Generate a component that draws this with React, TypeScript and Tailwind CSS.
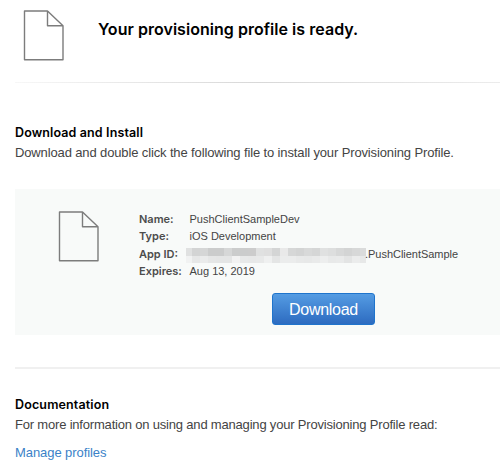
const TOP = ["#e0e1e1","#d3d4d4","#d5d6d6","#cbcccc","#cbcccc","#d6d7d7","#cbcccc","#cbcccc","#cccccc","#e0e1e1","#dfdfdf","#d4d5d5","#e9e9e9","#d6d7d7","#d3d4d4","#d8d9d9","#d5d6d6","#e0e1e1","#dddede","#d7d8d8","#d3d4d4","#d7d8d8","#dadbdb"];
const BOTTOM = ["#f1f2f2","#e6e7e7","#eaebeb","#e5e6e6","#e4e5e5","#e4e5e5","#f2f2f2","#e8e9e9","#e7e8e8","#e8e9e9","#eff0f0","#e4e5e5","#ebecec","#ebecec","#e8e9e9","#e7e8e8","#e9eaea","#edeeee","#e8e9e9","#e9eaea","#e3e4e4","#ebecec","#e7e8e8"];

function FileIcon() {
  return (
    <svg className="h-[52px] w-[42px] shrink-0" viewBox="0 0 42 52" fill="none" stroke="#7c7c7c" strokeWidth="1.4" strokeLinejoin="round">
      <path d="M1.5 1H24.5L40 15.8V49.8H1.5Z" />
      <path d="M24.5 1V15.8H40" />
    </svg>
  );
}

function MaskedPrefix() {
  return (
    <span className="-ml-[3.5px] mt-[3px] grid h-[15px] w-[180px] shrink-0 grid-cols-[6px_repeat(21,8px)_6px] grid-rows-[8px_7px]">
      {[...TOP, ...BOTTOM].map((color, i) => (
        <i key={i} style={{ backgroundColor: color }} />
      ))}
    </span>
  );
}

export default function App() {
  return (
    <main className="h-[473px] w-[500px] overflow-hidden bg-white pl-[15px] pt-[10px] font-['Liberation_Sans',sans-serif] text-[#444]">
      <header className="flex h-[72px] pl-[8px]">
        <FileIcon />
        <h1 className="ml-[33px] mt-[8px] whitespace-nowrap font-['Inter',sans-serif] text-[16px] leading-[22px] font-semibold tracking-[0.035px] text-black">Your provisioning profile is ready.</h1>
      </header>
      <div className="h-px bg-linear-to-r from-[#f7f7f7] via-[#d8d8d8] via-50% to-[#ececec]" />
      <section className="pt-[40px]">
        <h2 className="whitespace-nowrap font-['Inter',sans-serif] text-[12.5px] leading-[20px] font-semibold tracking-[0.12px] text-black">Download and Install</h2>
        <p className="whitespace-nowrap text-[13px] leading-[20px] tracking-[-0.13px]">Download and double click the following file to install your Provisioning Profile.</p>
      </section>
      <section className="mt-[26px] h-[146px] bg-[#f8faf9] pt-[21px]">
        <div className="flex h-[73px] pl-[43px]">
          <div className="pt-[1.3px]"><FileIcon /></div>
          <dl className="ml-[39px] grid grid-cols-[50.5px_auto] auto-rows-[17.4px] whitespace-nowrap text-[11px] leading-[18px]">
            <dt className="font-['Inter',sans-serif] font-semibold text-[#4c4c4c]">Name:</dt>
            <dd>PushClientSampleDev</dd>
            <dt className="font-['Inter',sans-serif] font-semibold text-[#4c4c4c]">Type:</dt>
            <dd>iOS Development</dd>
            <dt className="font-['Inter',sans-serif] font-semibold text-[#4c4c4c]">App ID:</dt>
            <dd className="flex items-start"><MaskedPrefix /><span className="-ml-px tracking-[-0.03px]">.PushClientSample</span></dd>
            <dt className="font-['Inter',sans-serif] font-semibold text-[#4c4c4c]">Expires:</dt>
            <dd>Aug 13, 2019</dd>
          </dl>
        </div>
        <button className="ml-[257px] mt-[10px] flex h-[32px] w-[103px] items-center justify-center rounded-[3px] border border-[#1f74cc] bg-linear-to-b from-[#559ce3] to-[#2d6bc0] pt-[2px] text-[16px] tracking-[-0.3px] text-white">Download</button>
      </section>
      <div className="mt-[32px] h-[2px] bg-[#f0f0f0]" />
      <section className="pt-[26px]">
        <h2 className="whitespace-nowrap font-['Inter',sans-serif] text-[12.5px] leading-[20px] font-semibold tracking-[0.14px] text-black">Documentation</h2>
        <p className="whitespace-nowrap text-[13px] leading-[20px] tracking-[-0.19px]">For more information on using and managing your Provisioning Profile read:</p>
        <a className="mt-[8px] block text-[13px] leading-[20px] tracking-[-0.07px] text-[#3b82c8]">Manage profiles</a>
      </section>
    </main>
  );
}
